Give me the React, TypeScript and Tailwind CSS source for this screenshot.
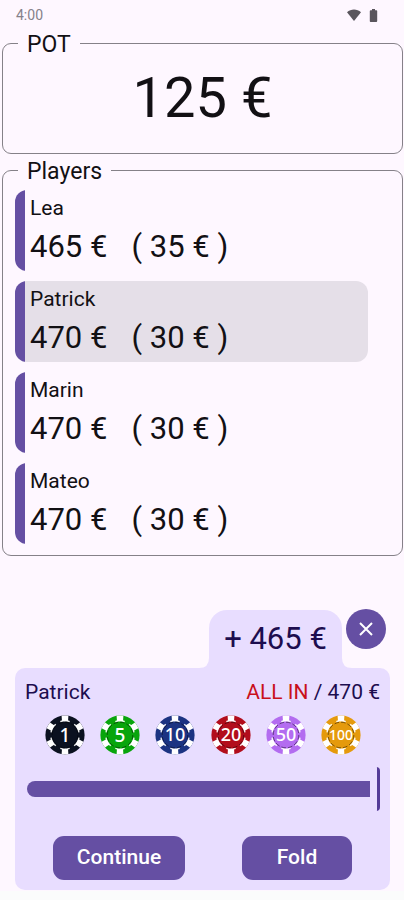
import { useState } from "react";
import { clsx } from "clsx";

const PLAYERS = [
  { name: "Lea", stack: 465, bet: 35 },
  { name: "Patrick", stack: 470, bet: 30, active: true },
  { name: "Marin", stack: 470, bet: 30 },
  { name: "Mateo", stack: 470, bet: 30 },
];

const CHIPS = [
  { value: 1, color: "#0b1120", size: 19 },
  { value: 5, color: "#08a50c", size: 19 },
  { value: 10, color: "#1b3382", size: 18 },
  { value: 20, color: "#b20d1c", size: 18 },
  { value: 50, color: "#b36cf0", size: 18 },
  { value: 100, color: "#e59a0c", size: 14 },
];

const SPOTS = [0, 60, 120, 180, 240, 300];

function StatusBar() {
  return (
    <header className="flex h-[30px] items-center justify-between pl-4 pr-[26px] text-sm text-[#85818a]">
      <span>4:00</span>
      <div className="flex items-center gap-2 text-[#5a565d]" aria-hidden="true">
        <svg width="14" height="12" viewBox="0 0 14 12" fill="currentColor">
          <path d="M0 3.2C4 -.4 10 -.4 14 3.2L7 12Z" />
        </svg>
        <svg width="9" height="13" viewBox="0 0 9 13" fill="currentColor">
          <path d="M3 0h3v1.3h1.4c.4 0 .8.3.8.8v10c0 .5-.4.9-.8.9H1.6a.9.9 0 0 1-.8-.9v-10c0-.5.4-.8.8-.8H3z" />
        </svg>
      </div>
    </header>
  );
}

function Chip({ value, color, size }: { value: number; color: string; size: number }) {
  return (
    <svg viewBox="0 0 40 40" className="size-10" aria-hidden="true">
      <circle cx="20" cy="20" r="19.6" fill={color} />
      {/* edge spots */}
      {SPOTS.map((angle) => (
        <path
          key={angle}
          transform={`rotate(${angle} 20 20)`}
          d="M16.6 .7Q20 .2 23.4 .7L23 6.6Q20 6.2 17 6.6Z"
          fill="#fff"
        />
      ))}
      {/* short dashes on both sides of each spot */}
      <circle
        cx="20"
        cy="20"
        r="14.2"
        fill="none"
        stroke="#fff"
        strokeOpacity=".9"
        strokeWidth="1.4"
        pathLength="120"
        strokeDasharray="3 7"
        strokeDashoffset="-3.5"
      />
      <circle
        cx="20"
        cy="20"
        r="12.8"
        fill={color}
        stroke="#000"
        strokeOpacity=".45"
        pathLength="120"
        strokeDasharray="7 3"
      />
      <text
        x="20"
        y={20 + size * 0.36}
        textAnchor="middle"
        fontSize={size}
        fill="#fff"
        className="font-['Noto_Sans',sans-serif] font-medium"
      >
        {value}
      </text>
    </svg>
  );
}

function TabCorner({ className }: { className?: string }) {
  return (
    <svg viewBox="0 0 10 10" className={clsx("size-2.5", className)} aria-hidden="true">
      <path d="M10 0V10H0Q10 10 10 0Z" fill="#e8ddff" />
    </svg>
  );
}

function BetPanel() {
  const max = 465;
  const [bet, setBet] = useState(max);
  const percent = (bet / max) * 100;

  return (
    <section className="ml-[15px] mr-3.5 mt-[54px] text-[#1d0d4f]" aria-label="Bet">
      <div className="flex items-start justify-end pr-1">
        <div className="flex items-end self-end">
          <TabCorner />
          <output className="flex h-[58px] w-[133px] items-center justify-center rounded-t-[18px] bg-[#e8ddff] text-[31px]">
            + {bet} €
          </output>
          <TabCorner className="-scale-x-100" />
        </div>
        <button
          type="button"
          aria-label="Close"
          className="-ml-1.5 -mt-px flex size-10 items-center justify-center rounded-full bg-[#654fa3] text-white"
        >
          <svg width="14" height="14" viewBox="0 0 14 14" stroke="currentColor" strokeWidth="2">
            <path d="M1 1l12 12M13 1L1 13" />
          </svg>
        </button>
      </div>

      <div className="rounded-[10px] bg-[#e8ddff] p-2.5">
        <div className="flex justify-between text-[21px] leading-7">
          <span>Patrick</span>
          <span>
            <span className="text-[#c9101c]">ALL IN</span> / 470 €
          </span>
        </div>

        <div className="mt-[9px] flex justify-between pl-5 pr-[19px]">
          {CHIPS.map((chip) => (
            <button
              key={chip.value}
              type="button"
              aria-label={`Add ${chip.value} €`}
              onClick={() => setBet(Math.min(max, bet + chip.value))}
            >
              <Chip {...chip} />
            </button>
          ))}
        </div>

        <input
          type="range"
          aria-label="Bet amount"
          min={0}
          max={max}
          value={bet}
          onChange={(e) => setBet(Number(e.target.value))}
          className="ml-0.5 mt-3 block h-11 w-[calc(100%-2px)] appearance-none bg-transparent [&::-webkit-slider-runnable-track]:h-4 [&::-webkit-slider-runnable-track]:rounded-l-full [&::-webkit-slider-runnable-track]:bg-(image:--track) [&::-webkit-slider-thumb]:-mt-3.5 [&::-webkit-slider-thumb]:h-11 [&::-webkit-slider-thumb]:w-2.5 [&::-webkit-slider-thumb]:appearance-none [&::-webkit-slider-thumb]:rounded-r-sm [&::-webkit-slider-thumb]:border-l-[7px] [&::-webkit-slider-thumb]:border-[#e8ddff] [&::-webkit-slider-thumb]:bg-[#543b98]"
          style={{ "--track": `linear-gradient(to right, #654fa3 ${percent}%, #cfc2ea ${percent}%)` } as React.CSSProperties}
        />

        <div className="mt-[25px] flex justify-between px-7 text-[21px] text-white">
          <button type="button" className="h-11 w-[132px] rounded-[11px] bg-[#654fa3] font-medium">
            Continue
          </button>
          <button type="button" className="h-11 w-[110px] rounded-[11px] bg-[#654fa3] font-medium">
            Fold
          </button>
        </div>
      </div>
    </section>
  );
}

export default function App() {
  return (
    <div className="flex min-h-screen flex-col bg-[#fef7ff] font-[Roboto,sans-serif] text-[#121014]">
      <StatusBar />

      <main className="flex flex-col">
        <fieldset className="ml-0.5 mr-px rounded-[9px] border border-[#858188] pb-[13px]">
          <legend className="ml-[15px] px-[9px] pt-1 text-[23px] leading-[22px]">POT</legend>
          <p className="text-center text-[56px] leading-[84px]">125 €</p>
        </fieldset>

        <fieldset className="ml-0.5 mr-px mt-[3px] rounded-[9px] border border-[#858188] pb-[11px] pl-3 pr-[34px]">
          <legend className="ml-[3px] px-[9px] pt-1 text-[23px] leading-[22px]">Players</legend>
          <ul className="mt-[7px] flex flex-col gap-2.5">
            {PLAYERS.map((player) => (
              <li
                key={player.name}
                className={clsx(
                  "flex h-[81px] overflow-hidden rounded-xl",
                  player.active && "bg-[#e5dfe8]"
                )}
              >
                <span className="w-2.5 bg-[#654fa3]" />
                <div className="pl-[5px] pt-1">
                  <p className="text-[21px] leading-7">{player.name}</p>
                  <p className="flex gap-6 text-[31px] leading-[50px]">
                    <span>{player.stack} €</span>
                    <span>( {player.bet} € )</span>
                  </p>
                </div>
              </li>
            ))}
          </ul>
        </fieldset>

        <BetPanel />
      </main>

      <div className="mt-px flex-1 bg-[#fbfcfc]" />
    </div>
  );
}
